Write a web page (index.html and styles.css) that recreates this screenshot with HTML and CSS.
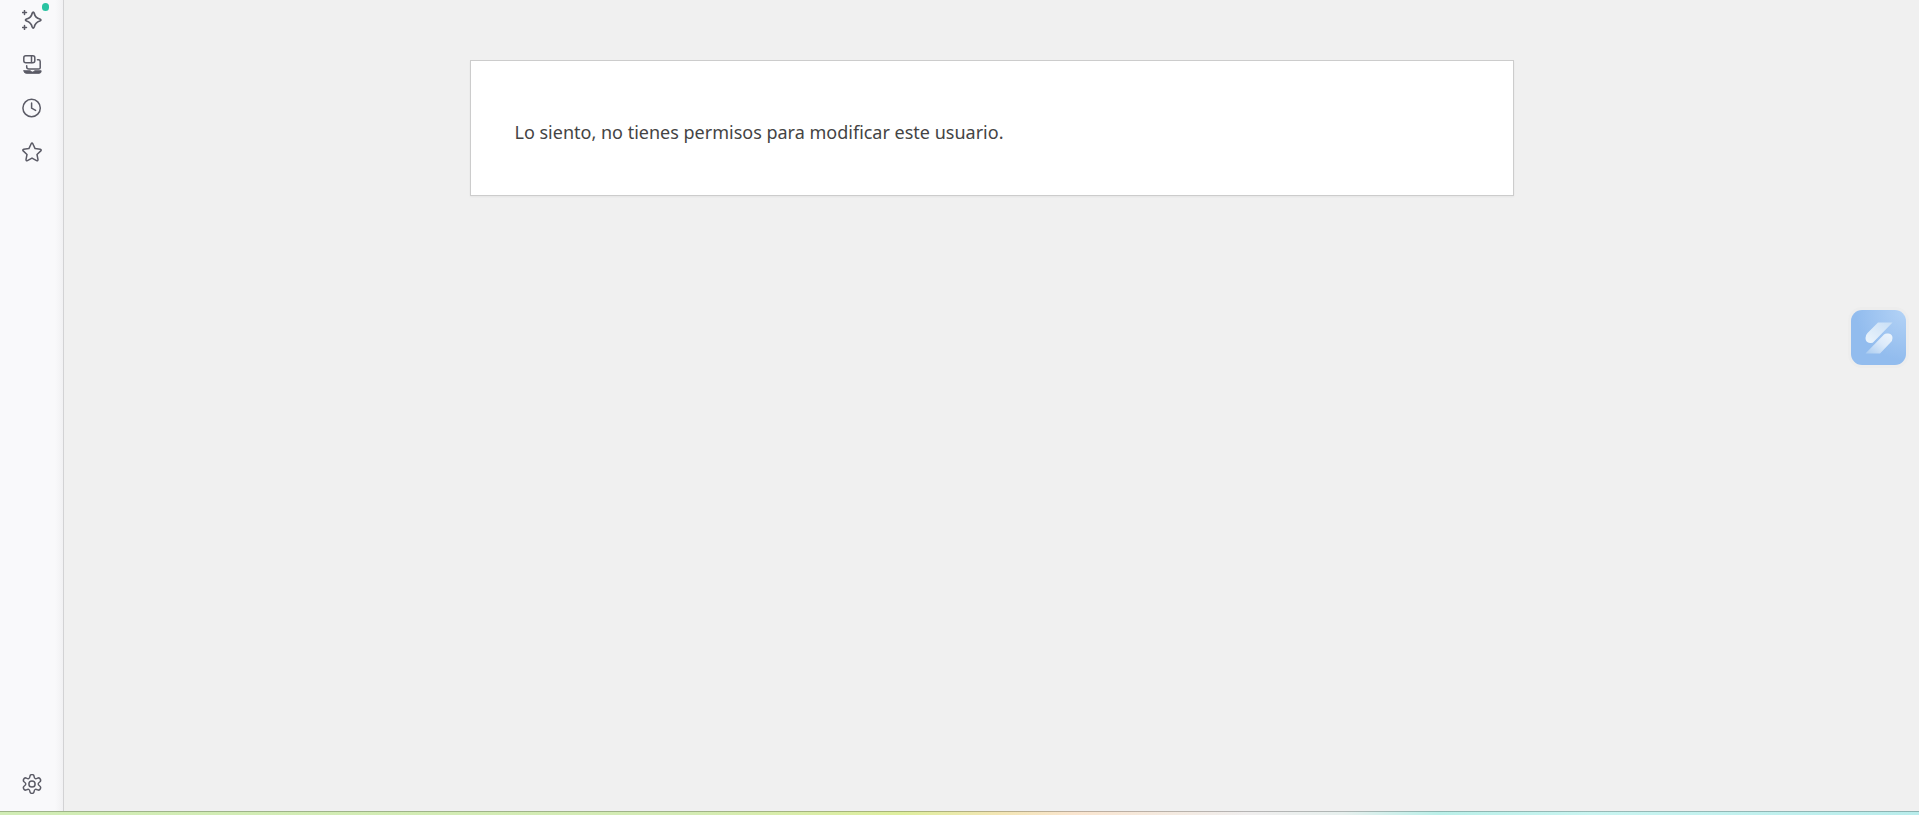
FILE: index.html
```html
<!DOCTYPE html>
<html lang="es">
<head>
<meta charset="utf-8">
<meta name="viewport" content="width=device-width, initial-scale=1">
<title>Permisos de usuario</title>
<link rel="stylesheet" href="styles.css">
</head>
<body>
<div class="shell">
  <nav class="sidebar" aria-label="Barra lateral">
    <button class="tool" type="button" aria-label="Asistente">
      <svg class="icon" viewBox="0 0 20 20"><path stroke-width="1.700" d="M10.200 3.200q1-2.200 2 0C13.100 7 14.500 8.200 17.800 9q2.200 1 0 2C14.500 12 13.100 13.200 12.200 17q-1 2.200-2 0C9.300 13.200 8 12 4.600 11q-2.200-1 0-2C8 8.200 9.300 7 10.200 3.200Z"/><path d="M2.500.6v4M.5 2.600h4M2.500 15.500v4M.5 17.500h4"/></svg>
      <span class="badge"></span>
    </button>
    <button class="tool" type="button" aria-label="Dispositivos">
      <svg class="icon" viewBox="0 0 20 20"><rect x="1.800" y="1.800" width="11" height="7" rx="2"/><path d="M9.500 2v6.500M15.500 5.800h1q1.700 0 1.700 1.700v6.200q0 1.400-1.500 1.400H7q-2.300 0-2.300-2v-1.300"/><path class="solid" d="M2 16.800H8.500q0 1.300 2 1.300t2-1.300H19.200q0 2.500-2 2.500H4.200q-2.200 0-2.200-2.500Z"/></svg>
    </button>
    <button class="tool" type="button" aria-label="Historial">
      <svg class="icon" viewBox="0 0 20 20"><circle cx="9.600" cy="10" r="8.700"/><path d="M9.600 5v5.200l4 2.200"/></svg>
    </button>
    <button class="tool" type="button" aria-label="Marcadores">
      <svg class="icon" viewBox="0 0 20 20"><path d="M9.200 1.700q.8-1.300 1.600 0l2.300 4.900 5.200.7q1.500.4.500 1.600L15 12.500l1 5.100q0 1.500-1.400 1L10 16.100l-4.600 2.500q-1.400.5-1.400-1l1-5.100-3.800-3.600Q.2 7.700 1.700 7.300l5.200-.7Z"/></svg>
    </button>
    <button class="tool tool-settings" type="button" aria-label="Configuración">
      <svg class="icon" viewBox="0 0 20 20"><circle cx="10" cy="10" r="3.100"/><path d="M7.900 2.500Q8 .6 10 .6t2.100 1.900q.2 1.800 1.200 2.100.7.300 2.300-.5 1.800-.8 2.700 1t-.6 2.900Q16.200 9 16.200 10t1.500 2q1.500 1.100.6 2.900t-2.700 1q-1.600-.8-2.300-.5-1 .3-1.200 2.100Q12 19.400 10 19.400t-2.100-1.900q-.2-1.800-1.200-2.100-.7-.3-2.300.5-1.800.8-2.700-1t.6-2.900Q3.800 11 3.800 10T2.300 8Q.8 6.900 1.700 5.100t2.700-1q1.600.8 2.300.5 1-.3 1.200-2.100Z"/></svg>
    </button>
  </nav>
  <main class="page">
    <section class="notice"><p class="message">Lo siento, no tienes permisos para modificar este usuario.</p></section>
  </main>
</div>
<div class="strip"></div>
<button class="launcher" type="button" aria-label="Abrir extensión">
  <svg class="launcher-mark" viewBox="0 0 28 32">
    <defs>
      <linearGradient id="top-stroke" x1="0" y1="1" x2="1" y2="0"><stop stop-color="#edf5fc"/><stop offset="1" stop-color="#c8dff6"/></linearGradient>
      <linearGradient id="bottom-stroke" x1="0" y1="1" x2="1" y2="0"><stop stop-color="#a9cbf0"/><stop offset=".55" stop-color="#dceafa"/><stop offset="1" stop-color="#edf5fc"/></linearGradient>
    </defs>
    <path fill="url(#top-stroke)" d="M13 .5H27.500L9 19.500Q8 21 6 21H5Q.5 20.500.5 16 .5 13 2.500 11Z"/>
    <path fill="url(#bottom-stroke)" d="M15 31.500H.500L19 12.500Q20 11.500 22 11.500h1.500q4 .5 4 4.500 0 3-2 4.500Z"/>
  </svg>
</button>
</body>
</html>
```
FILE: styles.css
```css
* { box-sizing: border-box; }

body {
  display: flex;
  flex-direction: column;
  min-height: 100vh;
  margin: 0;
  background: #f0f0f0;
  color: #444;
  font-family: "Segoe UI", "Noto Sans", sans-serif;
}

.shell { display: flex; flex: 1; }

.sidebar {
  display: flex;
  flex-direction: column;
  align-items: center;
  gap: 4px;
  width: 64px;
  padding-bottom: 7px;
  border-right: 1px solid #d2d2d4;
  background: linear-gradient(to right, #f9f9fb calc(100% - 8px), #f1f1f3);
}

.tool {
  position: relative;
  display: grid;
  place-items: center;
  width: 40px;
  height: 40px;
  padding: 0;
  border: 0;
  background: none;
  color: #5b5b66;
}

.tool-settings { margin-top: auto; }

.icon {
  width: 20px;
  height: 20px;
  fill: none;
  stroke: currentColor;
  stroke-width: 1.5;
  stroke-linecap: round;
  stroke-linejoin: round;
}

.solid { fill: currentColor; stroke-width: 1; }

.badge {
  position: absolute;
  top: 3px;
  right: 3px;
  width: 7px;
  height: 8px;
  border-radius: 4px;
  background: #2ac3a2;
}

.page { flex: 1; padding: 60px 24px; }

.notice {
  max-width: 1044px;
  margin: 0 auto;
  padding: 56px 44px 48px;
  border: 1px solid #ccc;
  background: #fff;
  box-shadow: 0 1px 2px rgba(0, 0, 0, .05);
}

.message { margin: 0; font-size: 18px; line-height: 30px; }

.strip {
  height: 4px;
  border-top: 1px solid rgba(0, 0, 0, .24);
  background: linear-gradient(to right, #d1edb5, #d4ecb4 36%, #dfef9e 47%, #f3e6b4 52%, #fae5cf 56%, #f0eeee 65%, #e7f0ee 70%, #baf0e9 75%, #c9f5f1 83%, #b9edec);
}

.launcher {
  position: fixed;
  top: 310px;
  right: 13px;
  display: grid;
  place-items: center;
  width: 55px;
  height: 55px;
  padding: 0;
  border: 0;
  border-radius: 11px;
  background: radial-gradient(circle at 100% 0, #b4d3f6, #92bcee 65%);
  box-shadow: 0 0 0 3px #ededed;
}

.launcher-mark { width: 28px; height: 32px; }
```
